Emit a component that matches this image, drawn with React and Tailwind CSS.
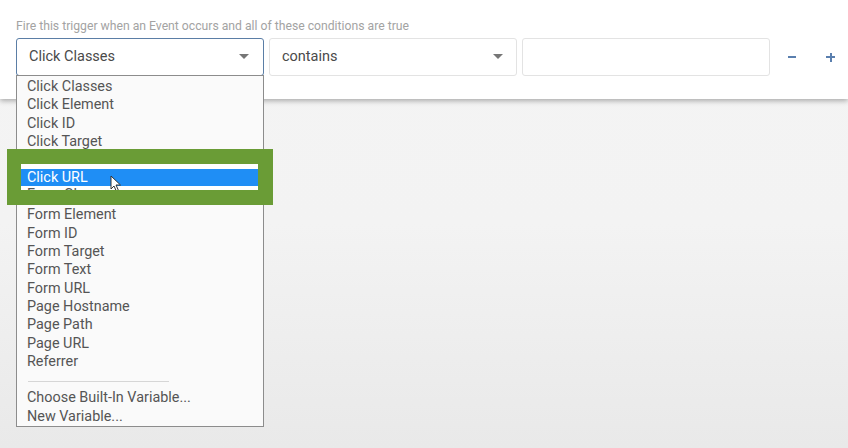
import React from 'react'

const items = [
  'Click Classes',
  'Click Element',
  'Click ID',
  'Click Target',
  'Click Text',
  'Click URL',
  'Form Classes',
  'Form Element',
  'Form ID',
  'Form Target',
  'Form Text',
  'Form URL',
  'Page Hostname',
  'Page Path',
  'Page URL',
  'Referrer',
]

function Caret() {
  return (
    <svg width="10" height="6" viewBox="0 0 10 6" className="shrink-0">
      <path d="M0 0 L10 0 L5 5 Z" fill="#767676" />
    </svg>
  )
}

function Cursor() {
  return (
    <svg width="12" height="18" viewBox="0 0 12 18" className="absolute left-[89px] top-[11px]">
      <path d="M1 1 L1 14 L4 11 L6.5 16.5 L8.5 15.5 L6 10 L10.5 10 Z" fill="#ffffff" stroke="#333" strokeWidth="1" strokeLinejoin="round" />
    </svg>
  )
}

export default function App() {
  return (
    <div
      className="relative w-[848px] h-[448px] overflow-hidden bg-gradient-to-b from-[#f4f4f4] via-[#f3f3f3] to-[#e9e9e9]"
      style={{ fontFamily: 'Roboto, "Liberation Sans", sans-serif' }}
    >
      <div className="h-[99px] bg-white shadow-[0_2px_5px_rgba(0,0,0,0.3)] pt-[18px] pl-4">
        <div className="text-[12.2px] leading-4 text-[#a3a3a3]">
          Fire this trigger when an Event occurs and all of these conditions are true
        </div>
        <div className="flex items-center mt-[4px]">
          <div className="w-[248px] h-[38px] border border-[#5b7ea6] rounded-[3px] flex items-center justify-between pl-3 pr-[14px] text-[14.5px] text-[#4a4a4a]">
            <span>Click Classes</span>
            <Caret />
          </div>
          <div className="ml-[5px] w-[248px] h-[38px] border border-[#e3e3e3] rounded-[3px] flex items-center justify-between pl-3 pr-[13px] text-[14.5px] text-[#4a4a4a]">
            <span>contains</span>
            <Caret />
          </div>
          <div className="ml-[5px] w-[248px] h-[38px] border border-[#e3e3e3] rounded-[3px]" />
          <div className="ml-[18px] w-[8px] h-[2px] bg-[#5a7fae]" />
          <div className="ml-[30px] relative w-[9px] h-[9px]">
            <div className="absolute left-0 top-[3.5px] w-[9px] h-[2px] bg-[#5a7fae]" />
            <div className="absolute left-[3.5px] top-0 w-[2px] h-[9px] bg-[#5a7fae]" />
          </div>
        </div>
      </div>

      <div className="absolute left-4 top-[75px] w-[248px] h-[352px] border border-[#8c8c8c] bg-[#fafafa] pt-[2px] pl-[10px] text-[14.4px] leading-[18.33px] text-[#555]">
        {items.map((t) => (
          <div key={t}>{t}</div>
        ))}
        <div className="w-[141px] h-px bg-[#d6d6d6] mt-[10px] mb-[7px] ml-px" />
        <div>Choose Built-In Variable...</div>
        <div>New Variable...</div>
      </div>

      <div className="absolute left-[7px] top-[149px] w-[266px] h-[56px] bg-[#6a9c36] pt-[15px] pl-[14px]">
        <div className="relative w-[237px] h-[26px] bg-white overflow-hidden">
          <div className="mt-[5px] h-[17px] bg-[#1f8ef5] text-white text-[14.4px] leading-[17px] pl-[6px]">Click URL</div>
          <div className="pl-[6px] text-[14.4px] leading-[18px] text-[#555]">Form Classes</div>
          <Cursor />
        </div>
      </div>
    </div>
  )
}
